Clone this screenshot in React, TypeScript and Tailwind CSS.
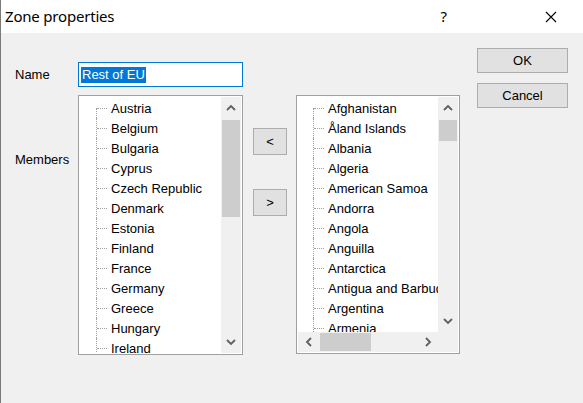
import React from "react";

const leftItems = [
  "Austria",
  "Belgium",
  "Bulgaria",
  "Cyprus",
  "Czech Republic",
  "Denmark",
  "Estonia",
  "Finland",
  "France",
  "Germany",
  "Greece",
  "Hungary",
  "Ireland",
];

const rightItems = [
  "Afghanistan",
  "Åland Islands",
  "Albania",
  "Algeria",
  "American Samoa",
  "Andorra",
  "Angola",
  "Anguilla",
  "Antarctica",
  "Antigua and Barbuda",
  "Argentina",
  "Armenia",
];

function Chevron({ dir }: { dir: "up" | "down" | "left" | "right" }) {
  const pts: Record<string, string> = {
    up: "1,6 5,2 9,6",
    down: "1,2 5,6 9,2",
    left: "6,1 2,5 6,9",
    right: "2,1 6,5 2,9",
  };
  const horiz = dir === "left" || dir === "right";
  return (
    <svg
      width={horiz ? 8 : 10}
      height={horiz ? 10 : 8}
      viewBox={horiz ? "0 0 8 10" : "0 0 10 8"}
    >
      <polyline
        points={pts[dir]}
        fill="none"
        stroke="#606060"
        strokeWidth="1.8"
      />
    </svg>
  );
}

function TreeRows({
  items,
  lineLeft,
  textLeft,
}: {
  items: string[];
  lineLeft: number;
  textLeft: number;
}) {
  return (
    <div className="pt-[1px]">
      {items.map((it, i) => (
        <div
          key={it}
          className="relative h-[20px] flex items-center whitespace-nowrap text-[13px] text-black leading-none"
          style={{ paddingLeft: textLeft }}
        >
          <span
            className="absolute bottom-0 border-l border-dotted border-[#a0a0a0]"
            style={{ left: lineLeft, top: i === 0 ? 10 : 0 }}
          />
          <span
            className="absolute top-[10px] w-[10px] border-t border-dotted border-[#a0a0a0]"
            style={{ left: lineLeft + 1 }}
          />
          <span>{it}</span>
        </div>
      ))}
    </div>
  );
}

export default function App() {
  return (
    <div className="w-[583px] h-[403px] overflow-hidden border-l border-[#7a7a7a] bg-[#f0f0f0] flex flex-col font-['Liberation_Sans',Arial,sans-serif] text-black">
      {/* Title bar */}
      <div className="h-[33px] bg-white flex items-center pl-[4px] shrink-0">
        <span className="text-[15px] font-['Noto_Sans',sans-serif] tracking-[-0.2px]">
          Zone properties
        </span>
        <span className="ml-auto mr-[98px] text-[15px] font-['Noto_Sans',sans-serif]">
          ?
        </span>
        <svg width="12" height="12" viewBox="0 0 12 12" className="mr-[26px]">
          <path d="M1 1 L11 11 M11 1 L1 11" stroke="#000" strokeWidth="1.1" />
        </svg>
      </div>

      {/* Body */}
      <div className="flex pl-[14px]">
        {/* Left section */}
        <div className="flex flex-col pt-[29px]">
          <div className="flex items-center h-[25px]">
            <div className="w-[63px] text-[13px]">Name</div>
            <div className="w-[165px] h-[25px] bg-white border border-[#0078d7] flex items-center pl-[2px]">
              <span className="bg-[#0078d7] text-white text-[13px] h-[16px] leading-[16px] px-[1px]">
                Rest of EU
              </span>
            </div>
          </div>

          <div className="flex mt-[8px]">
            <div className="w-[63px] pt-[55px] text-[13px]">Members</div>

            {/* Left list */}
            <div className="w-[165px] h-[260px] bg-white border border-[#a0a0a0] p-[1px] flex">
              <div className="flex-1 overflow-hidden">
                <TreeRows items={leftItems} lineLeft={16} textLeft={31} />
              </div>
              <div className="w-[20px] bg-[#f0f0f0] flex flex-col">
                <div className="h-[22px] flex items-center justify-center">
                  <Chevron dir="up" />
                </div>
                <div className="flex-1 flex flex-col pt-[1px]">
                  <div className="h-[97px] bg-[#cdcdcd] mx-[1px]" />
                </div>
                <div className="h-[22px] flex items-center justify-center">
                  <Chevron dir="down" />
                </div>
              </div>
            </div>

            {/* Move buttons */}
            <div className="ml-[10px] w-[34px] pt-[33px] flex flex-col">
              <div className="h-[27px] bg-[#e1e1e1] border border-[#adadad] flex items-center justify-center text-[13px]">
                &lt;
              </div>
              <div className="mt-[34px] h-[27px] bg-[#e1e1e1] border border-[#adadad] flex items-center justify-center text-[13px]">
                &gt;
              </div>
            </div>

            {/* Right list */}
            <div className="ml-[9px] w-[164px] h-[259px] bg-white border border-[#a0a0a0] p-[1px] flex flex-col">
              <div className="flex flex-1 min-h-0">
                <div className="flex-1 overflow-hidden">
                  <TreeRows items={rightItems} lineLeft={15} textLeft={30} />
                </div>
                <div className="w-[20px] bg-[#f0f0f0] flex flex-col">
                  <div className="h-[22px] flex items-center justify-center">
                    <Chevron dir="up" />
                  </div>
                  <div className="flex-1 flex flex-col pt-[1px]">
                    <div className="h-[21px] bg-[#cdcdcd] mx-[1px]" />
                  </div>
                  <div className="h-[22px] flex items-center justify-center">
                    <Chevron dir="down" />
                  </div>
                </div>
              </div>
              <div className="h-[20px] flex bg-[#f0f0f0] shrink-0">
                <div className="w-[21px] flex items-center justify-center">
                  <Chevron dir="left" />
                </div>
                <div className="flex-1 flex items-center pl-[1px]">
                  <div className="w-[51px] h-[18px] bg-[#cdcdcd]" />
                </div>
                <div className="w-[21px] flex items-center justify-center">
                  <Chevron dir="right" />
                </div>
                <div className="w-[20px] bg-[#f0f0f0]" />
              </div>
            </div>
          </div>
        </div>

        {/* Right section */}
        <div className="ml-[17px] pt-[15px] flex flex-col gap-[10px]">
          <div className="w-[91px] h-[25px] bg-[#e1e1e1] border border-[#adadad] flex items-center justify-center text-[13px]">
            OK
          </div>
          <div className="w-[91px] h-[25px] bg-[#e1e1e1] border border-[#adadad] flex items-center justify-center text-[13px]">
            Cancel
          </div>
        </div>
      </div>
    </div>
  );
}
